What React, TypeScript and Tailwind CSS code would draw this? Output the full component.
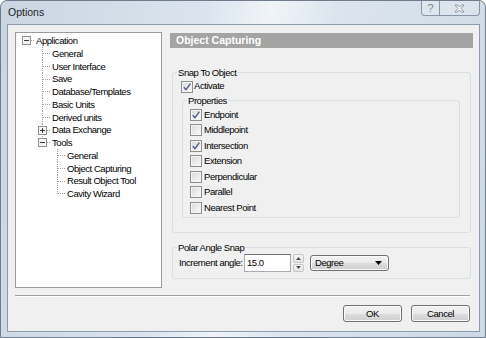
import React from "react";

type Node = { label: string; level: 0 | 1 | 2; exp?: "+" | "-"; h: 12 | 13 };

const tree: Node[] = [
  { label: "Application", level: 0, exp: "-", h: 13 },
  { label: "General", level: 1, h: 13 },
  { label: "User Interface", level: 1, h: 13 },
  { label: "Save", level: 1, h: 12 },
  { label: "Database/Templates", level: 1, h: 13 },
  { label: "Basic Units", level: 1, h: 13 },
  { label: "Derived units", level: 1, h: 13 },
  { label: "Data Exchange", level: 1, exp: "+", h: 12 },
  { label: "Tools", level: 1, exp: "-", h: 13 },
  { label: "General", level: 2, h: 13 },
  { label: "Object Capturing", level: 2, h: 13 },
  { label: "Result Object Tool", level: 2, h: 12 },
  { label: "Cavity Wizard", level: 2, h: 13 },
];

const props = [
  { label: "Endpoint", checked: true },
  { label: "Middlepoint", checked: false },
  { label: "Intersection", checked: true },
  { label: "Extension", checked: false },
  { label: "Perpendicular", checked: false },
  { label: "Parallel", checked: false },
  { label: "Nearest Point", checked: false },
];

const dot = { stroke: "#a0a0a0", strokeDasharray: "1 1" };

function Expander({ x, plus }: { x: number; plus?: boolean }) {
  return (
    <g>
      <rect x={x + 0.5} y={2.5} width={8} height={8} fill="#f4f4f4" stroke="#919191" />
      <line x1={x + 2} y1={6.5} x2={x + 7} y2={6.5} stroke="#3a3a3a" />
      {plus && <line x1={x + 4.5} y1={4} x2={x + 4.5} y2={9} stroke="#3a3a3a" />}
    </g>
  );
}

function TreeRow({ node, index }: { node: Node; index: number }) {
  const w = node.level === 0 ? 20 : node.level === 1 ? 36 : 51;
  const h = node.h;
  return (
    <div className={`flex ${h === 13 ? "h-[13px] leading-[13px]" : "h-[12px] leading-[12px]"}`}>
      <svg width={w} height={h} className="shrink-0">
        {index >= 1 && index <= 8 && (
          <line x1={26.5} y1={0} x2={26.5} y2={index === 8 ? 7 : h} {...dot} />
        )}
        {node.level === 2 && (
          <>
            <line x1={41.5} y1={0} x2={41.5} y2={index === 12 ? 7 : h} {...dot} />
            <line x1={42} y1={6.5} x2={50} y2={6.5} {...dot} />
          </>
        )}
        {node.level === 1 && !node.exp && <line x1={27} y1={6.5} x2={35} y2={6.5} {...dot} />}
        {node.level === 1 && node.exp && (
          <>
            <line x1={31} y1={6.5} x2={35} y2={6.5} {...dot} />
            <Expander x={22} plus={node.exp === "+"} />
          </>
        )}
        {node.level === 0 && (
          <>
            <line x1={15} y1={6.5} x2={19} y2={6.5} {...dot} />
            <Expander x={6} />
          </>
        )}
      </svg>
      <span className="whitespace-nowrap">{node.label}</span>
    </div>
  );
}

function Check({ checked }: { checked?: boolean }) {
  return (
    <span className="w-[12px] h-[12px] shrink-0 border border-[#8e8f8f] bg-[linear-gradient(135deg,#d9d9d9,#fbfbfb)] shadow-[inset_0_0_0_1px_#f4f4f4] flex items-center justify-center">
      {checked && (
        <svg width="10" height="10" viewBox="0 0 10 10">
          <path d="M1.8 5.2 L4 7.6 L8.4 1.6" fill="none" stroke="#4b5d8c" strokeWidth="1.4" />
        </svg>
      )}
    </span>
  );
}

const btn =
  "border border-[#707070] rounded-[3px] bg-[linear-gradient(#f2f2f2_0%,#ebebeb_50%,#dddddd_51%,#cfcfcf_100%)] shadow-[inset_0_0_0_1px_#fbfbfb]";

export default function App() {
  return (
    <div className="w-[486px] h-[338px] rounded-t-[7px] border border-[#6f7c8c] bg-[linear-gradient(100deg,#c9d5e2_0%,#dbe4ee_38%,#f0f4f8_50%,#dce5ee_62%,#cdd9e5_100%)] flex flex-col font-['Liberation_Sans',sans-serif] text-[9.5px] tracking-[-0.45px] text-black overflow-hidden">
      {/* title bar */}
      <div className="h-[23px] flex items-start">
        <span className="ml-[7px] mt-[5px] text-[10.5px] tracking-normal leading-[13px] text-[#1e1e1e]">
          Options
        </span>
        <div className="ml-auto mr-[5px] flex">
          <div className="w-[19px] h-[15px] border border-t-0 border-[#8795a8] rounded-bl-[4px] bg-white/20 flex items-center justify-center text-[11px] tracking-normal text-[#7c8796]">
            ?
          </div>
          <div className="w-[40px] h-[15px] border border-l-0 border-t-0 border-[#8795a8] rounded-br-[4px] bg-white/20 flex items-center justify-center">
            <svg width="11" height="9" viewBox="0 0 11 9">
              <path
                d="M1 1 H3.5 L5.5 3 L7.5 1 H10 L7 4.5 L10 8 H7.5 L5.5 6 L3.5 8 H1 L4 4.5 Z"
                fill="#f4f6f8"
                stroke="#7c8796"
                strokeWidth="0.8"
              />
            </svg>
          </div>
        </div>
      </div>

      {/* client area */}
      <div className="ml-[6px] mr-[5px] mb-[5px] h-[308px] border border-[#8b9aae] bg-[#f0f0f0] flex flex-col">
        <div className="pt-[7px] pl-[7px] flex gap-[8px]">
          <div className="w-[147px] h-[256px] border border-[#9a9a9a] bg-white pt-[1px]">
            {tree.map((n, i) => (
              <TreeRow key={i} node={n} index={i} />
            ))}
          </div>

          <div className="w-[303px] mt-[1px] flex flex-col">
            <div className="h-[15px] bg-[#a4a4a4] pl-[6px] font-bold text-[10.5px] tracking-normal leading-[15px] text-white">
              Object Capturing
            </div>

            <fieldset className="mt-[18px] mx-[2px] border border-[#d5dfe5] rounded-[3px] pb-[14px]">
              <legend className="ml-[4px] px-[1px] leading-[13px]">Snap To Object</legend>
              <div className="mt-[1px] ml-[8px] h-[13px] flex items-center gap-[1px]">
                <Check checked />
                <span>Activate</span>
              </div>
              <fieldset className="mt-[1px] ml-[9px] mr-[10px] border border-[#d5dfe5] rounded-[3px] pb-[1.5px]">
                <legend className="ml-[4px] px-[1px] leading-[13px]">Properties</legend>
                {props.map((p) => (
                  <div key={p.label} className="ml-[7px] h-[15.5px] flex items-center gap-[2px]">
                    <Check checked={p.checked} />
                    <span>{p.label}</span>
                  </div>
                ))}
              </fieldset>
            </fieldset>

            <fieldset className="mt-[8px] mx-[2px] border border-[#d5dfe5] rounded-[3px] pb-[6px]">
              <legend className="ml-[4px] px-[1px] leading-[13px]">Polar Angle Snap</legend>
              <div className="ml-[6px] h-[18px] flex items-center">
                <span className="w-[65px] whitespace-nowrap">Increment angle:</span>
                <div className="w-[47px] h-[18px] border border-[#abadb3] border-t-[#707070] bg-white pl-[2px] leading-[16px]">
                  15.0
                </div>
                <div className="ml-[2px] w-[11px] h-[18px] flex flex-col gap-[1px]">
                  <div className="flex-1 border border-[#c6c6c6] rounded-[2px] bg-[linear-gradient(#f6f6f6,#e4e4e4)] flex items-center justify-center">
                    <svg width="5" height="3" viewBox="0 0 5 3">
                      <path d="M0 3 L2.5 0 L5 3 Z" fill="#4d4d4d" />
                    </svg>
                  </div>
                  <div className="flex-1 border border-[#c6c6c6] rounded-[2px] bg-[linear-gradient(#f6f6f6,#e4e4e4)] flex items-center justify-center">
                    <svg width="5" height="3" viewBox="0 0 5 3">
                      <path d="M0 0 L2.5 3 L5 0 Z" fill="#4d4d4d" />
                    </svg>
                  </div>
                </div>
                <div className={`ml-[6px] w-[79px] h-[16px] ${btn} flex items-center pl-[4px] pr-[6px]`}>
                  <span className="flex-1 leading-[14px]">Degree</span>
                  <svg width="7" height="4" viewBox="0 0 7 4">
                    <path d="M0 0 L7 0 L3.5 4 Z" fill="#000" />
                  </svg>
                </div>
              </div>
            </fieldset>
          </div>
        </div>

        <div className="mt-[7px] ml-[7px] mr-[9px] h-[2px] border-t border-[#a0a0a0] border-b border-b-white" />

        <div className="mt-[8px] mr-[9px] flex justify-end gap-[9px]">
          <button className={`w-[59px] h-[17px] ${btn} leading-[15px]`}>OK</button>
          <button className={`w-[59px] h-[17px] ${btn} leading-[15px]`}>Cancel</button>
        </div>
      </div>
    </div>
  );
}
